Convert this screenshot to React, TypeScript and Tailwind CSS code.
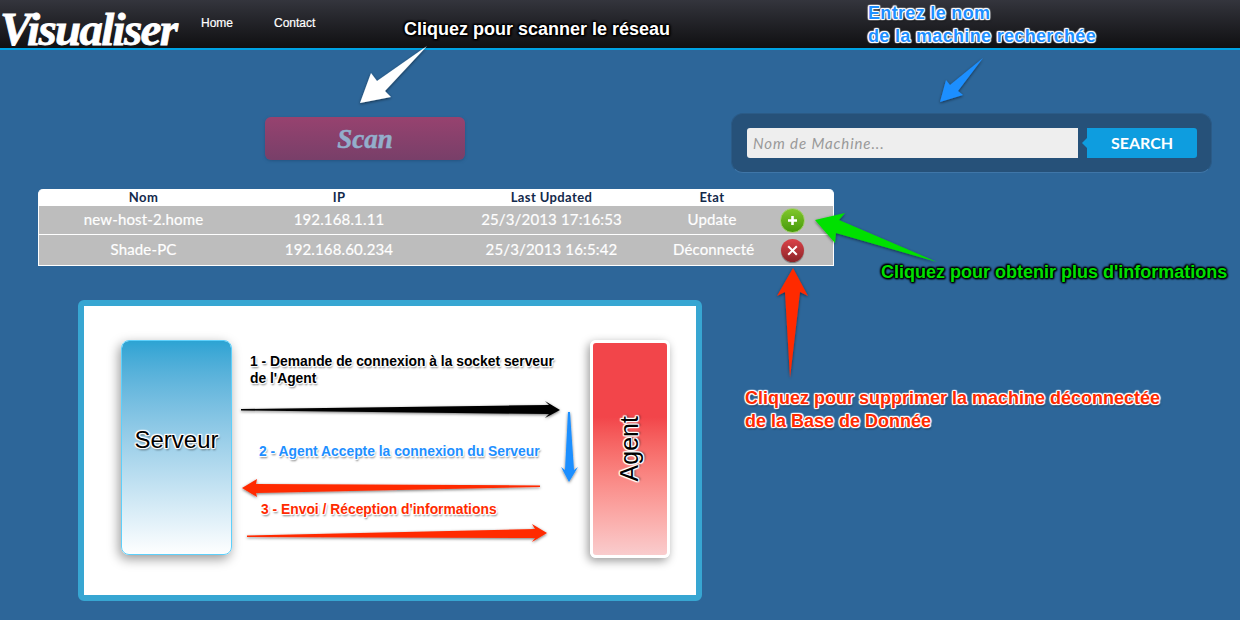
const Label = ({ className, children }: { className: string; children: React.ReactNode }) => (
  <div className={`absolute font-['Liberation_Sans',Arial,sans-serif] font-bold whitespace-nowrap ${className}`}>{children}</div>
);

const halo = "[text-shadow:0_0_1px_#fff,1px_0_1px_#fff,-1px_0_1px_#fff,0_1px_1px_#fff,0_-1px_1px_#fff,1px_1px_1px_#fff,-1px_-1px_1px_#fff,1px_-1px_1px_#fff,-1px_1px_1px_#fff,1px_2px_2px_#0009]";
const darkHalo = "[text-shadow:0_0_2px_#000,1px_0_2px_#000,-1px_0_2px_#000,0_1px_2px_#000,0_-1px_2px_#000,1px_1px_2px_#000,-1px_-1px_2px_#000]";

const rows = [
  { nom: "new-host-2.home", ip: "192.168.1.11", date: "25/3/2013 17:16:53", etat: "Update", ok: true },
  { nom: "Shade-PC", ip: "192.168.60.234", date: "25/3/2013 16:5:42", etat: "Déconnecté", ok: false },
];

const cols = "grid grid-cols-[209px_182px_243px_78px_1fr] items-center text-center";

function Arrows() {
  return (
    <svg className="absolute left-0 top-0 pointer-events-none" width="1240" height="620" viewBox="0 0 1240 620">
      <defs>
        <filter id="s" x="-20%" y="-20%" width="140%" height="140%">
          <feDropShadow dx="0" dy="1" stdDeviation="1.5" floodColor="#000" floodOpacity="0.55" />
        </filter>
      </defs>
      <g filter="url(#s)">
        <polygon fill="#fff" points="427,46 385,91 391,97 360,103 371,73 377,81" />
        <polygon fill="#1e8fff" points="983,58 958,91 963,95 940,102 946,80 950,85" />
        <polygon fill="#00e000" points="937,262 839,220 845,213 815,220 835,243 836,233" />
        <polygon fill="#ff2a00" points="793,268 808,296 800,292 790,378 785,292 777,296" />
        <polygon fill="#000" points="241,409 549,405 545,401 560,410 545,418 549,414 241,410.5" />
        <polygon fill="#1e8fff" points="568,412 570,412 574,470 578,467 569,482 561,467 565,470" />
        <polygon fill="#ff2a00" points="242,488 257,479 256,484 540,485.5 540,487 256,493 257,497" />
        <polygon fill="#ff2a00" points="247,535.5 535,529 532,524 547,533 532,542 535,538 247,537" />
      </g>
    </svg>
  );
}

export default function App() {
  return (
    <div className="relative w-[1240px] h-[620px] overflow-hidden bg-[#2d6699] font-['Lato',sans-serif]">
      <header className="h-[50px] border-b-2 border-[#00a3e4] bg-gradient-to-b from-[#34353d] to-[#101012] flex items-start">
        <div className="w-[201px] pt-[3px] text-white font-['Liberation_Serif',serif] italic font-bold text-[47px] leading-[52px] tracking-[-1.7px] [-webkit-text-stroke:0.8px_#fff]">
          Visualiser
        </div>
        <nav className="flex gap-[41px] pt-[16px] text-white text-[12px] leading-[15px] font-['Liberation_Sans',sans-serif] [-webkit-text-stroke:0.2px_#fff]">
          <a>Home</a>
          <a>Contact</a>
        </nav>
      </header>

      <main className="pl-[38px]">
        <section className="flex items-start pt-[63px]">
          <button className="ml-[227px] mt-[4px] w-[200px] h-[43px] rounded-[6px] bg-gradient-to-b from-[#97426f] to-[#783f69] shadow-[0_1px_3px_#1e4a7399] text-[#93aecb] font-['Liberation_Serif',serif] italic font-bold text-[27px] leading-[45px] [-webkit-text-stroke:0.5px_#93aecb]">
            Scan
          </button>
          <div className="ml-[266px] w-[481px] h-[60px] rounded-[12px] bg-[#265179] border border-[#2b5b87] border-b-[#3f76a8] flex items-center pl-[15px]">
            <input
              readOnly
              placeholder="Nom de Machine..."
              className="w-[331px] h-[30px] rounded-l-[3px] bg-[#eeeeee] px-[6px] text-[15px] italic tracking-[0.9px] placeholder:text-[#999999] outline-none"
            />
            <div className="relative ml-[9px] w-[110px] h-[30px] rounded-r-[3px] bg-[#0e9ddf] text-white font-bold text-[16px] leading-[30px] text-center">
              <span className="absolute left-[-5px] top-[10px] border-y-[5px] border-r-[5px] border-y-transparent border-r-[#0e9ddf]" />
              SEARCH
            </div>
          </div>
        </section>

        <section className="mt-[16px] w-[796px] rounded-t-[5px] overflow-hidden bg-white border-x border-b border-white">
          <div className={`${cols} h-[17px] text-[13px] leading-[17px] font-bold text-[#13294b] tracking-[0.4px]`}>
            <span>Nom</span>
            <span>IP</span>
            <span>Last Updated</span>
            <span>Etat</span>
            <span />
          </div>
          {rows.map((r) => (
            <div
              key={r.nom}
              className={`${cols} bg-[#bdbdbd] text-white text-[15px] tracking-[0.15px] [-webkit-text-stroke:0.2px_#fff] ${r.ok ? "h-[28px] mb-px" : "h-[30px]"}`}
            >
              <span className="pb-[2px]">{r.nom}</span>
              <span className="pb-[2px]">{r.ip}</span>
              <span className="pb-[2px]">{r.date}</span>
              <span className="pb-[2px]">{r.etat}</span>
              <span className="flex justify-center">
                {r.ok ? (
                  <span className="w-[25px] h-[25px] rounded-full bg-gradient-to-b from-[#80c72a] to-[#459a08] border border-[#a5d070] flex items-center justify-center">
                    <svg width="11" height="11" viewBox="0 0 11 11">
                      <path d="M5.5 1v9M1 5.5h9" stroke="#fff" strokeWidth="2.6" />
                    </svg>
                  </span>
                ) : (
                  <span className="w-[23px] h-[23px] rounded-full bg-gradient-to-b from-[#dc4349] to-[#8c2328] shadow-[0_1px_1px_#0006] flex items-center justify-center">
                    <svg width="11" height="11" viewBox="0 0 11 11">
                      <path d="M1.2 1.2l8.6 8.6M9.8 1.2l-8.6 8.6" stroke="#fff" strokeWidth="2" />
                    </svg>
                  </span>
                )}
              </span>
            </div>
          ))}
        </section>

        <section className="ml-[40px] mt-[34px] w-[624px] h-[301px] rounded-[6px] border-[6px] border-[#37a6d2] bg-white flex items-start justify-between pl-[37px] pr-[26px] pt-[34px]">
          <div className="w-[111px] h-[215px] rounded-[8px] border border-[#5ed0fb] bg-gradient-to-b from-[#2aa3d3] to-white [background-origin:border-box] [background-clip:padding-box] shadow-[-2px_4px_12px_#0006] flex items-center justify-center text-[24px] text-black font-['Liberation_Sans',sans-serif] pb-[16px]">
            <span className={halo}>Serveur</span>
          </div>
          <div className="w-[80px] h-[218px] rounded-[6px] border-[3px] border-white bg-gradient-to-b from-[#f2454a] from-35% to-[#f9cccd] shadow-[-2px_3px_10px_#0006] flex items-center justify-center">
            <span className={`-rotate-90 text-[25px] text-black font-['Liberation_Sans',sans-serif] ${halo}`}>Agent</span>
          </div>
        </section>
      </main>

      <Arrows />

      <Label className={`left-[404px] top-[19px] text-[18px] leading-[20px] text-white ${darkHalo}`}>Cliquez pour scanner le réseau</Label>
      <Label className={`left-[868px] top-[2px] text-[18px] leading-[23px] tracking-[0.33px] text-[#1e8fff] ${halo}`}>
        Entrez le nom
        <br />
        de la machine recherchée
      </Label>
      <Label className={`left-[881px] top-[262px] text-[18px] leading-[20px] text-[#00e000] ${darkHalo}`}>Cliquez pour obtenir plus d'informations</Label>
      <Label className={`left-[745px] top-[387px] text-[18px] leading-[23px] text-[#ff2a00] ${halo}`}>
        Cliquez pour supprimer la machine déconnectée
        <br />
        de la Base de Donnée
      </Label>
      <Label className={`left-[250px] top-[353px] text-[13.85px] leading-[17px] text-black ${halo}`}>
        1 - Demande de connexion à la socket serveur
        <br />
        de l'Agent
      </Label>
      <Label className={`left-[259px] top-[443px] text-[13.85px] leading-[17px] text-[#1e8fff] ${halo}`}>2 - Agent Accepte la connexion du Serveur</Label>
      <Label className={`left-[261px] top-[501px] text-[13.85px] leading-[17px] text-[#ff2a00] ${halo}`}>3 - Envoi / Réception d'informations</Label>
    </div>
  );
}
